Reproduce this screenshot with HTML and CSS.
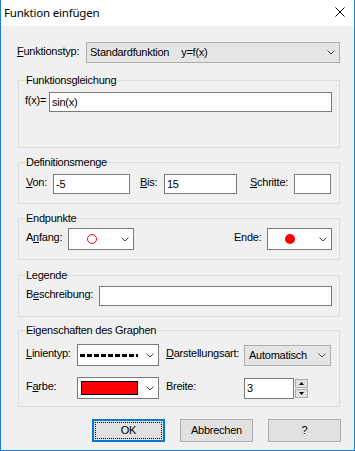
FILE: index.html
```html
<!DOCTYPE html>
<html lang="de">
<head>
    <meta charset="UTF-8">
    <title>Funktion einfügen</title>
    <link rel="stylesheet" href="styles.css">
</head>
<body>
    <div class="window">
        <div class="titlebar">
            <span class="title">Funktion einfügen</span>
            <svg class="close" width="10" height="10" viewBox="0 0 10 10">
                <path d="M0.5 0.5 L9.5 9.5 M9.5 0.5 L0.5 9.5" stroke="#000" stroke-width="1" fill="none"/>
            </svg>
        </div>
        <div class="client">
            <!-- Funktionstyp -->
            <div class="type-row">
                <span class="lbl type-lbl"><u>F</u>unktionstyp:</span>
                <div class="combo gray type-combo">
                    <span class="combo-text">Standardfunktion<span class="fx">y=f(x)</span></span>
                    <svg class="chev" width="8" height="5" viewBox="0 0 8 5"><polyline points="0.5,0.5 4,4 7.5,0.5" stroke="#444" fill="none"/></svg>
                </div>
            </div>

            <!-- Funktionsgleichung -->
            <fieldset class="group g-eq">
                <legend>Funktionsgleichung</legend>
                <div class="body eq-body">
                    <div class="row">
                        <span class="lbl fx-lbl">f(x)=</span>
                        <input class="txt grow" type="text" value="sin(x)">
                    </div>
                </div>
            </fieldset>

            <!-- Definitionsmenge -->
            <fieldset class="group g-def">
                <legend>Definitionsmenge</legend>
                <div class="body def-body">
                    <div class="row">
                        <span class="lbl von-lbl"><u>V</u>on:</span>
                        <input class="txt von" type="text" value="-5">
                        <span class="lbl bis-lbl"><u>B</u>is:</span>
                        <input class="txt bis" type="text" value="15">
                        <span class="lbl step-lbl"><u>S</u>chritte:</span>
                        <input class="txt step" type="text" value="">
                    </div>
                </div>
            </fieldset>

            <!-- Endpunkte -->
            <fieldset class="group g-end">
                <legend>Endpunkte</legend>
                <div class="body end-body">
                    <div class="row split">
                        <div class="row">
                            <span class="lbl start-lbl">A<u>n</u>fang:</span>
                            <div class="combo point-combo start-combo">
                                <svg width="10" height="10" viewBox="0 0 10 10"><circle cx="5" cy="5" r="4.5" stroke="#f00" fill="none"/></svg>
                                <svg class="chev" width="8" height="5" viewBox="0 0 8 5"><polyline points="0.5,0.5 4,4 7.5,0.5" stroke="#444" fill="none"/></svg>
                            </div>
                        </div>
                        <div class="row">
                            <span class="lbl end-lbl">Ende:</span>
                            <div class="combo point-combo end-combo">
                                <svg width="10" height="10" viewBox="0 0 10 10"><circle cx="5" cy="5" r="5" fill="#f00"/></svg>
                                <svg class="chev" width="8" height="5" viewBox="0 0 8 5"><polyline points="0.5,0.5 4,4 7.5,0.5" stroke="#444" fill="none"/></svg>
                            </div>
                        </div>
                    </div>
                </div>
            </fieldset>

            <!-- Legende -->
            <fieldset class="group g-leg">
                <legend>Legende</legend>
                <div class="body leg-body">
                    <div class="row">
                        <span class="lbl desc-lbl">B<u>e</u>schreibung:</span>
                        <input class="txt grow" type="text" value="">
                    </div>
                </div>
            </fieldset>

            <!-- Eigenschaften des Graphen -->
            <fieldset class="group g-prop">
                <legend>Eigenschaften des Graphen</legend>
                <div class="body prop-body">
                    <div class="row prop-row">
                        <span class="lbl p-lbl"><u>L</u>inientyp:</span>
                        <div class="combo style-combo">
                            <svg class="dashes" width="58" height="3" viewBox="0 0 58 3"><line x1="0" y1="1.5" x2="58" y2="1.5" stroke="#000" stroke-width="3" stroke-dasharray="5 2"/></svg>
                            <svg class="chev" width="8" height="5" viewBox="0 0 8 5"><polyline points="0.5,0.5 4,4 7.5,0.5" stroke="#444" fill="none"/></svg>
                        </div>
                        <span class="lbl q-lbl"><u>D</u>arstellungsart:</span>
                        <div class="combo gray mode-combo">
                            <span class="combo-text">Automatisch</span>
                            <svg class="chev" width="8" height="5" viewBox="0 0 8 5"><polyline points="0.5,0.5 4,4 7.5,0.5" stroke="#444" fill="none"/></svg>
                        </div>
                    </div>
                    <div class="row prop-row second">
                        <span class="lbl p-lbl">F<u>a</u>rbe:</span>
                        <div class="combo style-combo color-combo">
                            <span class="swatch"></span>
                            <svg class="chev" width="8" height="5" viewBox="0 0 8 5"><polyline points="0.5,0.5 4,4 7.5,0.5" stroke="#444" fill="none"/></svg>
                        </div>
                        <span class="lbl q-lbl">Breite:</span>
                        <input class="txt width-in" type="text" value="3">
                        <div class="spin">
                            <span class="spin-btn"><svg width="5" height="3" viewBox="0 0 5 3"><polygon points="2.5,0 5,3 0,3" fill="#000"/></svg></span>
                            <span class="spin-btn"><svg width="5" height="3" viewBox="0 0 5 3"><polygon points="0,0 5,0 2.5,3" fill="#000"/></svg></span>
                        </div>
                    </div>
                </div>
            </fieldset>

            <div class="buttons">
                <button class="btn ok"><span class="focus">OK</span></button>
                <button class="btn">Abbrechen</button>
                <button class="btn">?</button>
            </div>
        </div>
    </div>
</body>
</html>
```

FILE: styles.css
```css
* {
    margin: 0;
    padding: 0;
    box-sizing: border-box;
}

body {
    width: 355px;
    height: 451px;
    font-family: "Liberation Sans", Arial, sans-serif;
    font-size: 11px;
    line-height: 13px;
    letter-spacing: -0.25px;
    color: #000;
    background: #fff;
}

.window {
    width: 355px;
    height: 451px;
    border: 1px solid #1b7fd6;
    border-top: 0;
    background: #f0f0f0;
    display: flex;
    flex-direction: column;
}

/* title bar */
.titlebar {
    height: 26px;
    background: #fff;
    display: flex;
    align-items: center;
    justify-content: space-between;
    padding: 0 9px 0 3px;
}

.title {
    font-family: "Noto Sans", sans-serif;
    font-size: 11.5px;
    letter-spacing: -0.2px;
    line-height: 16px;
}

.close {
    margin-top: -2px;
}

.client {
    padding: 16px 14px 0 15px;
}

u {
    text-decoration: underline;
    text-underline-offset: 1px;
}

.row {
    display: flex;
    align-items: center;
}

.lbl {
    white-space: nowrap;
    margin-top: -3px;
}

/* inputs */
.txt {
    height: 20px;
    border: 1px solid #7a7a7a;
    background: #fff;
    font: inherit;
    letter-spacing: inherit;
    padding: 0 2px;
    color: #000;
    outline: none;
}

.grow {
    flex: 1;
    min-width: 0;
}

/* combos */
.combo {
    height: 22px;
    border: 1px solid #7a7a7a;
    background: #fff;
    display: flex;
    align-items: center;
    justify-content: space-between;
}

.combo.gray {
    background: #e5e5e5;
    border-color: #adadad;
}

.combo-text {
    padding-left: 3px;
    white-space: nowrap;
}

.chev {
    margin-right: 4px;
    flex: none;
}

.type-row {
    display: flex;
    align-items: center;
    height: 21px;
}

.type-lbl {
    width: 69px;
    margin-left: 1px;
}

.type-combo {
    width: 254px;
    height: 21px;
}

.fx {
    margin-left: 12px;
}

/* group boxes */
.group {
    border: 1px solid #dcdcdc;
    margin-left: 2px;
    padding: 0 7px 0 7px;
    min-width: 0;
}

.group legend {
    padding: 0;
    line-height: 13px;
}

.g-eq { margin-top: 11px; }
.g-def { margin-top: 8px; }
.g-end { margin-top: 8px; }
.g-leg { margin-top: 9px; }
.g-prop { margin-top: 7px; }

.eq-body { padding-top: 5px; height: 60px; }
.def-body { padding-top: 5px; height: 34px; }
.end-body { padding-top: 3px; height: 34px; }
.leg-body { padding-top: 4px; height: 34px; }
.prop-body { padding-top: 7px; height: 69px; }

.fx-lbl {
    width: 24px;
    margin-left: -1px;
}

.von-lbl { width: 27px; }
.von { width: 77px; }
.bis-lbl { width: 24px; margin-left: 10px; }
.bis { width: 73px; }
.step-lbl { width: 44px; margin-left: 13px; }
.step { width: 37px; }

.split {
    justify-content: space-between;
}

.start-lbl { width: 42px; }
.end-lbl { width: 33px; }

.point-combo svg:first-child {
    flex: none;
}

.start-combo {
    width: 66px;
    padding-left: 18px;
}

.end-combo {
    width: 65px;
    padding-left: 17px;
}

.desc-lbl { width: 73px; }

.p-lbl { width: 51px; }
.q-lbl { width: 78px; margin-left: 7px; }

.style-combo {
    width: 82px;
    padding-left: 2px;
}

.mode-combo {
    width: 87px;
    height: 21px;
}

.mode-combo .combo-text {
    padding-left: 4px;
}

.second {
    margin-top: 11px;
}

.color-combo {
    padding-left: 3px;
}

.swatch {
    width: 57px;
    height: 14px;
    background: #f00;
    border: 1px solid #000;
}

.width-in {
    width: 50px;
    height: 21px;
}

.spin {
    margin-left: 1px;
    display: flex;
    flex-direction: column;
    gap: 1px;
}

.spin-btn {
    width: 13px;
    height: 9px;
    background: #e1e1e1;
    border: 1px solid #adadad;
    display: flex;
    align-items: center;
    justify-content: center;
}

.spin-btn svg {
    display: block;
}

/* buttons */
.buttons {
    margin-top: 12px;
    margin-right: -1px;
    display: flex;
    justify-content: flex-end;
    gap: 15px;
}

.btn {
    width: 73px;
    height: 23px;
    background: #e1e1e1;
    border: 1px solid #adadad;
    font: inherit;
    letter-spacing: inherit;
    color: #000;
}

.btn.ok {
    border: 2px solid #0078d7;
    padding: 1px;
}

.focus {
    display: flex;
    align-items: center;
    justify-content: center;
    height: 100%;
    border: 1px dotted #000;
}
```
